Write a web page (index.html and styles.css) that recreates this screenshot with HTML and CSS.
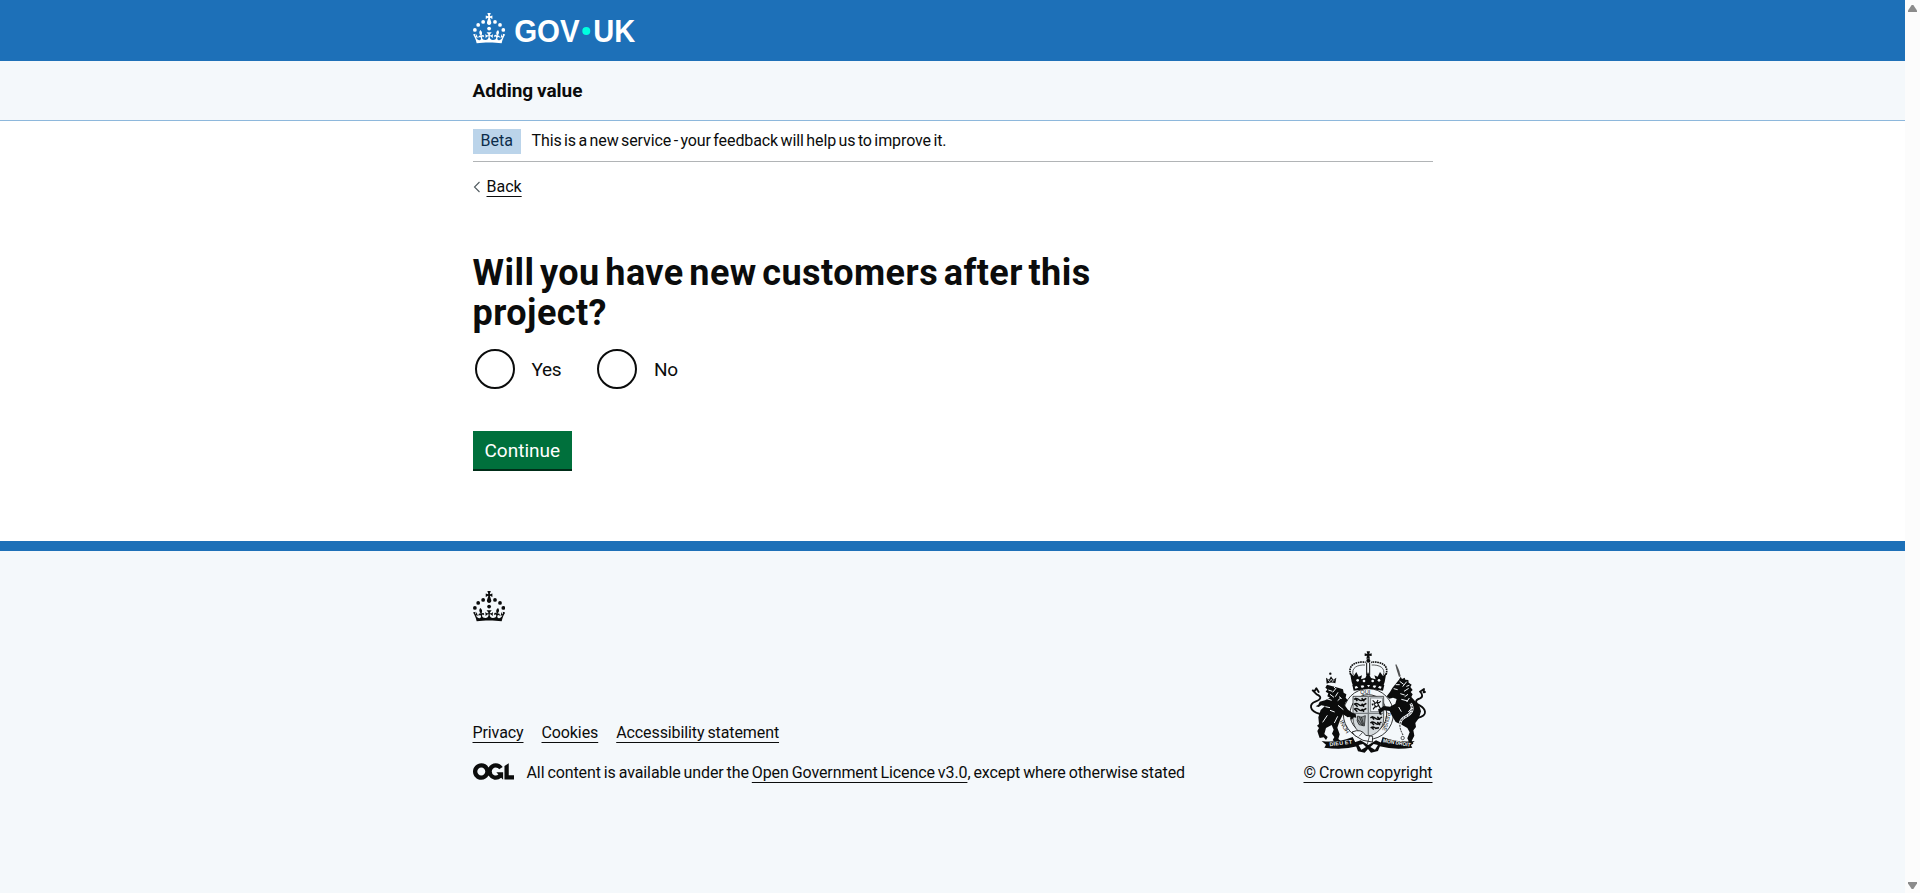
FILE: index.html
```html
<!DOCTYPE html>
<html lang="en">
<head>
<meta charset="utf-8">
<title>Will you have new customers after this project?</title>
<link rel="stylesheet" href="styles.css">
</head>
<body>
<svg width="0" height="0" class="defs" aria-hidden="true">
  <symbol id="crown" viewBox="0 0 64 60">
    <circle cx="20" cy="17.6" r="3.7"/><circle cx="10.2" cy="23.5" r="3.7"/><circle cx="3.7" cy="33.2" r="3.7"/>
    <circle cx="31.7" cy="30.6" r="3.7"/><circle cx="43.3" cy="17.6" r="3.7"/><circle cx="53.2" cy="23.5" r="3.7"/><circle cx="59.7" cy="33.2" r="3.7"/>
    <path d="M33.1,9.8c.2-.1.3-.3.5-.5l4.6,2.4v-6.8l-4.6,1.5c-.1-.2-.3-.3-.5-.5l1.9-5.9h-6.7l1.9,5.9c-.2.1-.3.3-.5.5l-4.6-1.5v6.8l4.6-2.4c.1.2.3.3.5.5l-2.6,8c-.9,2.8,1.2,5.7,4.1,5.7h0c3,0,5.1-2.9,4.1-5.7l-2.6-8ZM37,37.9s-3.4,3.8-4.1,6.1c2.2,0,4.2-.5,6.4-2.8l-.7,8.5c-2-2.8-4.4-4.1-5.7-3.8.1,3.1.5,6.7,5.8,7.2,3.7.3,6.7-1.5,7-3.8.4-2.6-2-4.3-3.7-1.6-1.4-4.5,2.4-6.1,4.9-3.2-1.9-4.5-1.8-7.7,2.4-10.9,3,4,2.6,7.3-1.2,11.1,2.4-1.3,6.2,0,4,4.6-1.2-2.8-3.7-2.2-4.2.2-.3,1.7.7,3.7,3,4.2,1.9.3,4.7-.9,7-5.9-1.3,0-2.4.7-3.9,1.7l2.4-8c.6,2.3,1.4,3.7,2.2,4.5.6-1.6.5-2.8,0-5.3l5,1.8c-2.6,3.6-5.2,8.7-7.3,17.5-7.4-1.1-15.7-1.7-24.5-1.7h0c-8.8,0-17.1.6-24.5,1.7-2.1-8.9-4.7-13.9-7.3-17.5l5-1.8c-.5,2.5-.6,3.7,0,5.3.8-.8,1.6-2.3,2.2-4.5l2.4,8c-1.5-1-2.6-1.7-3.9-1.7,2.3,5,5.2,6.2,7,5.9,2.3-.4,3.3-2.4,3-4.2-.5-2.4-3-3.1-4.2-.2-2.2-4.6,1.6-6,4-4.6-3.7-3.7-4.2-7.1-1.2-11.1,4.2,3.2,4.3,6.4,2.4,10.9,2.5-2.8,6.3-1.3,4.9,3.2-1.8-2.7-4.1-1-3.7,1.6.3,2.3,3.3,4.1,7,3.8,5.4-.5,5.7-4.2,5.8-7.2-1.3-.2-3.7,1-5.7,3.8l-.7-8.5c2.2,2.3,4.2,2.7,6.4,2.8-.7-2.3-4.1-6.1-4.1-6.1h10.6Z"/>
  </symbol>
</svg>
<div class="window">
  <div class="page">
    <header class="header">
      <div class="container header-inner">
        <svg class="logo" width="164" height="40" viewBox="0 0 164 40" role="img" aria-label="GOV.UK">
          <use href="#crown" width="32.5" height="30.5" x="0" y="0" fill="#fff"/>
          <g class="wordmark"><text x="41.2" y="28.6" textLength="65.5" lengthAdjust="spacingAndGlyphs">GOV</text><text x="120.3" y="28.6" textLength="42" lengthAdjust="spacingAndGlyphs">UK</text></g>
          <circle cx="113.3" cy="18" r="4" fill="#00ffe0"/>
        </svg>
      </div>
    </header>
    <div class="service"><div class="container"><a class="service-name">Adding value</a></div></div>
    <div class="container content">
      <div class="phase"><strong class="tag">Beta</strong><span class="phase-text">This is a new service - your feedback will help us to improve it.</span></div>
      <a class="back"><svg width="8" height="12" viewBox="0 0 8 12"><path d="M6.5 1 1.5 6l5 5" fill="none" stroke="#505a5f" stroke-width="1.1"/></svg><span class="link back-text">Back</span></a>
      <main class="main">
        <h1 class="heading">Will you have new customers after this<br>project?</h1>
        <div class="radios">
          <label class="radio"><span class="ring"></span><span>Yes</span></label>
          <label class="radio"><span class="ring"></span><span>No</span></label>
        </div>
        <button class="button">Continue</button>
      </main>
    </div>
    <footer class="footer">
      <div class="container footer-inner">
        <svg class="footer-crown" width="32.5" height="30.5"><use href="#crown" width="32.5" height="30.5"/></svg>
        <div class="meta">
          <div class="meta-left">
            <nav class="links"><a class="link">Privacy</a><a class="link">Cookies</a><a class="link">Accessibility statement</a></nav>
            <div class="licence">
              <svg class="ogl" width="41" height="17" viewBox="0 0 483.2 195.7"><path fill="#0b0c0c" d="M421.5 142.8V.1l-50.7 32.3v161.1h112.4v-50.7zm-122.3-9.6A47.12 47.12 0 0 1 221 97.8c0-26 21.1-47.1 47.1-47.1 16.7 0 31.4 8.7 39.7 21.8l42.7-27.2A97.63 97.63 0 0 0 268.1 0c-36.5 0-68.3 20.1-85.1 49.7A98 98 0 0 0 97.8 0C43.9 0 0 43.9 0 97.8s43.9 97.8 97.8 97.8c36.5 0 68.3-20.1 85.1-49.7a97.76 97.76 0 0 0 149.6 25.4l19.4 22.2h3v-87.8h-80l24.3 27.5zM97.8 145c-26 0-47.1-21.1-47.1-47.1s21.1-47.1 47.1-47.1 47.1 21.1 47.1 47.1S123.8 145 97.8 145"/></svg>
              <span class="licence-text">All content is available under the <a class="link">Open Government Licence v3.0</a>, except where otherwise stated</span>
            </div>
          </div>
          <div class="copyright">
            <svg class="crest" width="120" height="104" viewBox="55 30 360 312" aria-hidden="true">
              <g fill="#0b0c0c">
                <!-- crown -->
                <path d="M231 34h10l-2 8 7-2v8l-7-1 2 9h-11l2-9-7 1v-8l8 2z"/>
                <circle cx="236" cy="62" r="6"/>
                <g fill="none" stroke="#0b0c0c">
                  <path d="M183 104C172 72 205 63 228 67M289 104c11-32-22-41-45-37" stroke-width="5" stroke-dasharray="5 2"/>
                  <path d="M191 106c-8-24 14-32 35-31M281 106c8-24-14-32-35-31" stroke-width="2"/>
                  <path d="M231 68v38M240 68v38" stroke-width="3"/>
                </g>
                <path d="M181 98l11 10 8-12 7 14 10-4-3 12 13-4 8-18 9 18 14 4-4-12 10 4 7-14 9 12 10-10-5 28-8 23q-41-9-83 0l-8-23z"/>
                <path d="M188 135q48-11 96 0l-4 17q-44-9-88 0z"/>
              </g>
              <g fill="#f4f8fb"><circle cx="204" cy="121" r="4"/><circle cx="223" cy="123" r="4"/><circle cx="249" cy="123" r="4"/><circle cx="268" cy="121" r="4"/><path d="M195 140l6-2 5 5-9 3zM213 137l8-1 3 5-8 3zM232 135h9l-4 7zM252 136l8 1-4 7-7-3zM269 138l7 2-3 6-8-3z"/></g>
              <!-- garter -->
              <ellipse cx="236" cy="222" rx="75" ry="76" fill="#f4f8fb" stroke="#0b0c0c" stroke-width="2.5"/>
              <ellipse cx="236" cy="222" rx="55" ry="58" fill="#f4f8fb" stroke="#0b0c0c" stroke-width="2.5"/>
              <g class="motto">
                <text x="212" y="163">QUI</text>
                <text transform="translate(180 276) rotate(-119)">HONI</text>
                <text transform="translate(292 216) rotate(104)">PENSE</text>
              </g>
              <!-- shield -->
              <path d="M190 169h92v66c0 34-24 47-46 55-22-8-46-21-46-55z" fill="#d3d9dc" stroke="#0b0c0c" stroke-width="2"/>
              <path d="M236 169v120M190 220h92" stroke="#777d80" stroke-width="4"/>
              <g fill="none" stroke="#0b0c0c" stroke-width="4.5">
                <path d="M193 178q8-6 15 1t22-4M193 193q8-6 15 1t22-4M193 208q8-6 15 1t22-4M196 174l7 9m13-8 8 9m-29 7 9 9m12-9 7 9m-28 7 8 8m13-8 7 8"/>
                <path d="M242 234q8-6 15 1t20-4M242 249q8-6 15 1t18-4M243 264q8-6 15 1l10-2M246 229l7 10m10-9 8 9m-27 6 9 10m10-9 8 9m-25 6 6 8"/>
              </g>
              <rect x="243" y="174" width="35" height="41" fill="#f4f8fb" stroke="#777d80" stroke-width="2.5"/>
              <path d="M249 181l7 7M265 180l-4 8 8 0 4-5M253 192l9-5 5 9-8 5zM250 208l6-8M267 197l6 10-7 2M250 196l-3-5" fill="none" stroke="#0b0c0c" stroke-width="3.5"/>
              <path d="M204 228q10 8 23-1l-3 31-16-4q-9-10-4-26zM209 230l11 26M215 230l7 24M204 239l14 17" fill="#8d9395" stroke="#0b0c0c" stroke-width="2"/>
              <g fill="#0b0c0c">
                <!-- lion -->
                <path d="M112 134l-5 9 6 5-5 7 8 5-3 9 8 4-15 8-16 4-4 9-8 5 9 2 8-5 11 2-13 12-7 22 2 20-6 5 6 7-5 9 4 13 3 8 12-2 7 8 5-9-10-9 5-18 17-9 6 14-5 12 7 10-5 10 14 8 10-6-7-6 4-14-7-20 7-20 10-20 14 9 8-2 4 10 6-8 8 1-2-11-10-4-13-9-10-13 2-8 7-7-6-8 2-10-8-5-2-10-15-5z"/>
                <path d="M111 131l-2-18 9 6 6-10 7 10 9-6-3 17q-12-5-26 1z"/>
                <circle cx="122" cy="101" r="3.5"/>
                <!-- unicorn -->
                <path d="M317 74l3-1 5 10 4 10 4 16-5 2-6-18z" opacity=".7"/>
                <path d="M328 119l5-9 4 7 8-4 2 6 9 1 1 8 9 6-4 7 7 9-6 6 6 7-4 8 9 10 6 8 9 8 5 17-6 20-11 15 2 12-8 10 3 16-8 16 5 8-9 5-10-3 5-9-4-9 7-18-7-13-17-10-18-8-12-20-6-13-17-2-9 6 2 9-7-3-3-13 16-12 19 2 16-9 4-14-11-4-11 3-8-7 10-13 7-12z"/>
              </g>
              <g fill="none" stroke="#0b0c0c" stroke-width="5.5" stroke-linecap="round" stroke-linejoin="round">
                <path d="M91 222c-36-10-31-31-14-37s21-15 4-22l-12-12 6 2 5-8 7 11"/>
                <path d="M382 234c38-8 23-29 9-37-16-8-16-17 0-22 10-4 7-14 0-20l12-8-1 10 4-1"/>
              </g>
              <g fill="none" stroke="#f4f8fb" stroke-width="3">
                <path d="M114 119l6 6 5-8 4 8 6-6" stroke-width="2"/>
                <path d="M116 150l12 4M139 145l-10 12M121 163l12 9M145 157l-8 13M111 176l15 5M107 200l14 3M154 173l-10 9M145 196l16 13M113 226l-14 21M144 229l-10 20M133 141l5 5M148 170l8 6M121 211l14 5"/>
                <path d="M330 124l12 9M318 134h12M351 125l-12 15M357 145l-14 9M332 161l13 4M335 178l20 5M359 174l-8 12M366 204l-10 12M327 201l8 14M350 139l9-3M312 146l12 3M345 170l10-7"/>
                <path d="M363 190q15 25-15 40t-8 55" stroke-width="8"/>
              </g>
              <path d="M363 190q15 25-15 40t-8 55" fill="none" stroke="#0b0c0c" stroke-width="3" stroke-dasharray="6 3"/>
              <circle cx="339" cy="294" r="5" fill="#f4f8fb" stroke="#0b0c0c" stroke-width="2"/>
              <!-- strap and scroll -->
              <path d="M187 276q28-12 41 10l21 3-1 17-28-5-24-14z" fill="#f4f8fb" stroke="#0b0c0c" stroke-width="2.5"/>
              <path d="M240 286l-7 26M218 278l-10 11" stroke="#0b0c0c" stroke-width="2"/>
              <path d="M96 303q48 6 93-12l14 28q-43 12-99 4l5-9zM375 303q-50 6-96-12l-9 28q44 12 98 4l-5-9z" fill="#0b0c0c"/>
              <path d="M195 307l18-6 23 14 23-14 16 7-10 25-21 5-9-11-10 11-20-4z" fill="#0b0c0c"/>
              <path d="M207 315l13-3 9 9-14 8zM265 315l-13-3-10 9 14 8z" fill="#f4f8fb"/>
              <g class="scroll-text"><text transform="translate(120 319) rotate(-7)" textLength="68">DIEU ET</text><text transform="translate(279 307) rotate(9)" textLength="84" lengthAdjust="spacingAndGlyphs">MON DROIT</text></g>
            </svg>
            <a class="link">© Crown copyright</a>
          </div>
        </div>
      </div>
    </footer>
  </div>
  <div class="scrollbar">
    <svg width="9" height="7" viewBox="0 0 9 7"><path d="M3.7 0h1.6L9 5.5V7H0V5.5z"/></svg>
    <svg width="9" height="7" viewBox="0 0 9 7"><path d="M3.7 7h1.6L9 1.5V0H0v1.5z"/></svg>
  </div>
</div>
</body>
</html>
```

FILE: styles.css
```css
* { box-sizing: border-box; }
body { margin: 0; background: #fff; color: #0b0c0c; font-family: Roboto, sans-serif; font-size: 16px; line-height: 20px; }
.defs { display: block; }
.window { display: flex; height: 893px; overflow: hidden; }
.page { flex: 1; display: flex; flex-direction: column; }
.scrollbar { width: 15px; background: #fcfcfc; display: flex; flex-direction: column; justify-content: space-between; padding: 5px 3px 4px; fill: #8b8b8b; }
.container { width: 960px; margin: 0 auto; white-space: nowrap; }
.header { height: 61px; background: #1d70b8; }
.header-inner { padding-top: 13px; }
.logo { display: block; }
.wordmark { font: bold 31px "Liberation Sans", sans-serif; fill: #fff; }
.service { height: 60px; background: #f4f8fb; border-bottom: 1px solid #8eb8dc; padding-top: 17px; }
.service-name { font-size: 19px; line-height: 25px; font-weight: 700; word-spacing: -1px; }
.content { height: 420px; }
.phase { height: 41px; display: flex; align-items: flex-start; padding-top: 8px; border-bottom: 1px solid #b1b4b6; }
.tag { width: 48px; height: 25px; padding-left: 8px; line-height: 24px; margin-right: 11px; background: #bbd4ea; color: #0c2d4a; font-weight: 400; }
.phase-text { line-height: 24px; letter-spacing: -0.1px; word-spacing: -1.4px; }
.back { display: flex; align-items: center; margin-top: 15px; height: 20px; gap: 6px; }
.link { text-decoration: underline; text-decoration-thickness: 1px; text-underline-offset: 4px; }
.main { padding-top: 56px; }
.heading { margin: 0; font-size: 36px; line-height: 40px; font-weight: 700; letter-spacing: 0.45px; word-spacing: -3.8px; }
.radios { display: flex; margin-top: 16px; font-size: 19px; line-height: 25px; letter-spacing: -0.3px; }
.radio { display: flex; align-items: center; width: 122.5px; padding-left: 2px; gap: 17px; }
.ring { width: 40px; height: 40px; border: 2px solid #0b0c0c; border-radius: 50%; }
.button { display: block; width: 99px; height: 38px; margin: 42px 0 0; padding: 2px 0 0 12px; border: 0; background: #00703c; box-shadow: 0 2px 0 #002d18; color: #fff; font: 19px/36px Roboto, sans-serif; text-align: left; }
.footer { flex: 1; background: #f4f8fb; border-top: 10px solid #1d70b8; }
.footer-inner { padding-top: 40px; letter-spacing: -0.1px; word-spacing: -0.9px; }
.footer-crown { display: block; fill: #0b0c0c; }
.meta { display: flex; justify-content: space-between; align-items: flex-end; margin-top: 28.5px; }
.links { display: flex; gap: 18px; margin-bottom: 20px; }
.licence { display: flex; align-items: center; gap: 13px; }
.ogl { margin-bottom: 3px; }
.copyright { display: flex; flex-direction: column; align-items: flex-end; }
.crest { margin: 0 5px 9px 0; }
.motto { font: 17px "Liberation Sans", sans-serif; fill: #0b0c0c; }
.scroll-text { font: bold 16px "Liberation Sans", sans-serif; fill: #f4f8fb; }
```
